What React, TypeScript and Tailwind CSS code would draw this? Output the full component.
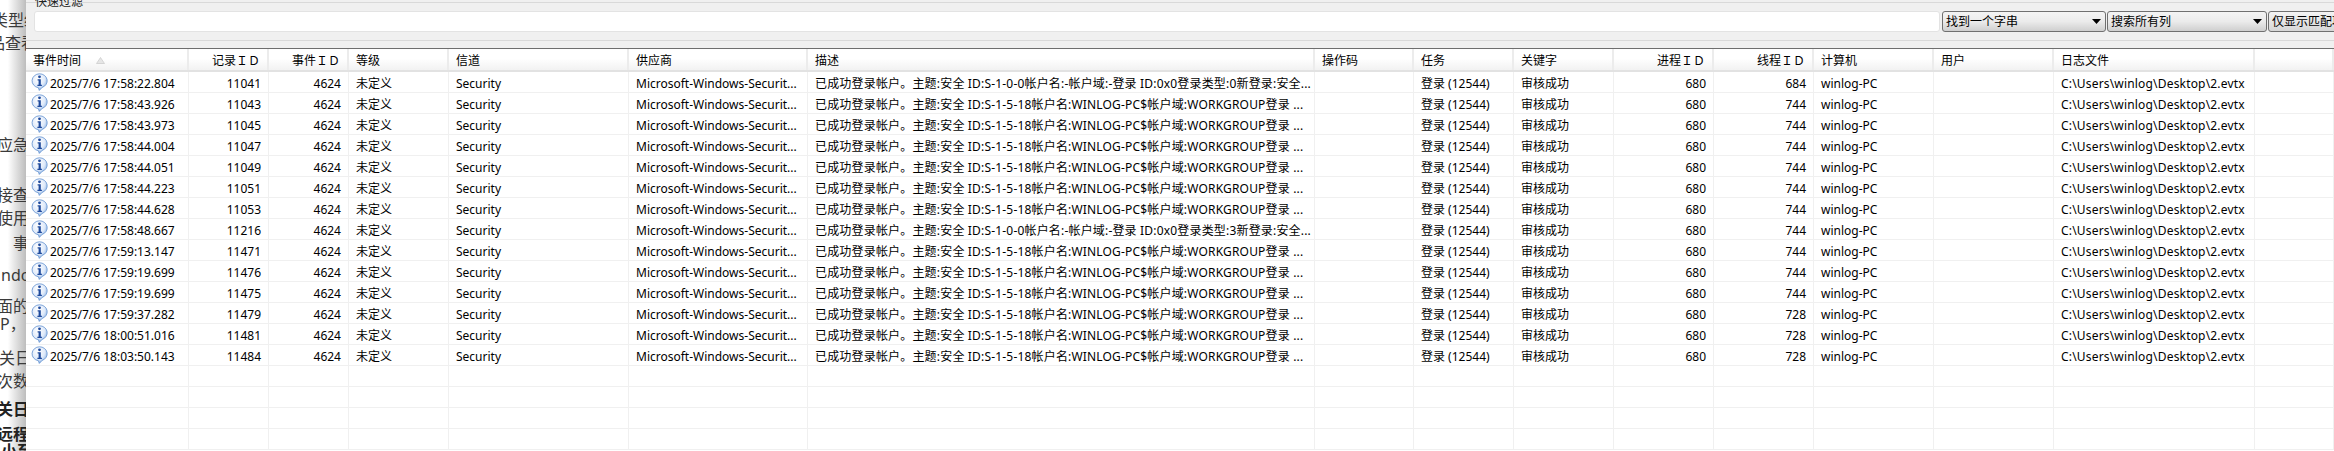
const columns = "grid grid-cols-[163px_80px_80px_100px_180px_179px_507px_99px_100px_100px_100px_100px_120px_120px_201px_1fr]";

const DESC_18 = "已成功登录帐户。主题:安全 ID:S-1-5-18帐户名:WINLOG-PC$帐户域:WORKGROUP登录 ...";

const rows = [
  { time: "2025/7/6 17:58:22.804", rec: "11041", thread: "684", desc: "已成功登录帐户。主题:安全 ID:S-1-0-0帐户名:-帐户域:-登录 ID:0x0登录类型:0新登录:安全..." },
  { time: "2025/7/6 17:58:43.926", rec: "11043", thread: "744", desc: DESC_18 },
  { time: "2025/7/6 17:58:43.973", rec: "11045", thread: "744", desc: DESC_18 },
  { time: "2025/7/6 17:58:44.004", rec: "11047", thread: "744", desc: DESC_18 },
  { time: "2025/7/6 17:58:44.051", rec: "11049", thread: "744", desc: DESC_18 },
  { time: "2025/7/6 17:58:44.223", rec: "11051", thread: "744", desc: DESC_18 },
  { time: "2025/7/6 17:58:44.628", rec: "11053", thread: "744", desc: DESC_18 },
  { time: "2025/7/6 17:58:48.667", rec: "11216", thread: "744", desc: "已成功登录帐户。主题:安全 ID:S-1-0-0帐户名:-帐户域:-登录 ID:0x0登录类型:3新登录:安全..." },
  { time: "2025/7/6 17:59:13.147", rec: "11471", thread: "744", desc: DESC_18 },
  { time: "2025/7/6 17:59:19.699", rec: "11476", thread: "744", desc: DESC_18 },
  { time: "2025/7/6 17:59:19.699", rec: "11475", thread: "744", desc: DESC_18 },
  { time: "2025/7/6 17:59:37.282", rec: "11479", thread: "728", desc: DESC_18 },
  { time: "2025/7/6 18:00:51.016", rec: "11481", thread: "728", desc: DESC_18 },
  { time: "2025/7/6 18:03:50.143", rec: "11484", thread: "728", desc: DESC_18 },
];

const headers = [
  { label: "事件时间" },
  { label: "记录ＩＤ", right: true },
  { label: "事件ＩＤ", right: true },
  { label: "等级" },
  { label: "信道" },
  { label: "供应商" },
  { label: "描述" },
  { label: "操作码" },
  { label: "任务" },
  { label: "关键字" },
  { label: "进程ＩＤ", right: true },
  { label: "线程ＩＤ", right: true },
  { label: "计算机" },
  { label: "用户" },
  { label: "日志文件" },
  { label: "" },
];

function InfoIcon() {
  return (
    <svg width="17" height="18" viewBox="0 0 17 18" className="shrink-0">
      <defs>
        <radialGradient id="bubble" cx="0.4" cy="0.3" r="0.8">
          <stop offset="0" stopColor="#ffffff" />
          <stop offset="0.55" stopColor="#dfeafa" />
          <stop offset="1" stopColor="#6f9fdc" />
        </radialGradient>
      </defs>
      <path
        d="M8.5 0.8a7.6 7 0 0 1 2.6 13.6L8.3 17.4 7.4 14.7A7.6 7 0 0 1 8.5 0.8z"
        fill="url(#bubble)"
        stroke="#5f8fcf"
        strokeWidth="0.8"
      />
      <circle cx="8.5" cy="3.8" r="1.4" fill="#1f4a9c" />
      <path d="M6.6 6.2h3.2v5.6h1.1v1.2H6.4v-1.2h1.2V7.4h-1z" fill="#1f4a9c" />
    </svg>
  );
}

function Caret() {
  return (
    <svg width="9" height="5" viewBox="0 0 9 5" className="shrink-0">
      <path d="M0 0h9L4.5 5z" fill="#000" />
    </svg>
  );
}

function Combo({ text, width }: { text: string; width: string }) {
  return (
    <div className={`${width} h-[21px] flex items-center justify-between pl-[3px] pr-[4px] border border-[#707070] rounded-[3px] bg-linear-to-b from-[#f4f4f4] via-[#ebebeb] to-[#cfcfcf] text-black`}>
      <span>{text}</span>
      <Caret />
    </div>
  );
}

function SideStrip() {
  return (
    <div className="w-[26px] h-full shrink-0 overflow-hidden bg-linear-to-r from-white from-[30%] to-[#bdbdbd] text-[16px] leading-[16px] text-[#3a3a3a] whitespace-nowrap">
      <div className="h-[16px] mt-[12px] -ml-[8px]">类型统</div>
      <div className="h-[16px] mt-[7px] -ml-[11px]">品查看</div>
      <div className="h-[16px] mt-[86px] -ml-[3px]">应急</div>
      <div className="h-[16px] mt-[34px] -ml-[3px]">接查</div>
      <div className="h-[16px] mt-[7px] -ml-[3px]">使用</div>
      <div className="h-[16px] mt-[9px] ml-[13px]">事</div>
      <div className="h-[16px] mt-[16px] ml-[1px]">ndows</div>
      <div className="h-[16px] mt-[15px] -ml-[3px]">面的</div>
      <div className="h-[16px] mt-[2px]">P，</div>
      <div className="h-[16px] mt-[18px] -ml-[1px]">关日</div>
      <div className="h-[16px] mt-[7px] -ml-[3px]">次数</div>
      <div className="h-[16px] mt-[12px] -ml-[3px] font-bold text-[#222]">关日</div>
      <div className="h-[16px] mt-[9px] -ml-[3px] font-bold text-[#222]">远程</div>
      <div className="h-[16px] mt-[1px] ml-[1px] font-bold text-[#222]">小至</div>
    </div>
  );
}

function FilterPanel() {
  return (
    <div className="h-[48px] shrink-0 overflow-hidden bg-[#f0f0f0] pt-[2px]">
      <div className="h-[39px] border-y border-[#d9d9d9] pl-[8px]">
        <div className="h-[14px] -mt-[8px] ml-[1px] leading-[14px] text-[#222]">快速过滤</div>
        <div className="flex gap-[1px] mt-[2px]">
          <div className="w-[1906px] h-[21px] mr-[1px] rounded-[3px] border border-[#e3e3e3] bg-white" />
          <Combo text="找到一个字串" width="w-[164px]" />
          <Combo text="搜索所有列" width="w-[160px]" />
          <div className="flex-1 h-[21px] -mr-[20px] pl-[3px] flex items-center whitespace-nowrap overflow-hidden border border-[#707070] rounded-[3px] bg-linear-to-b from-[#f4f4f4] to-[#d6d6d6] text-black">
            仅显示匹配项
          </div>
        </div>
      </div>
    </div>
  );
}

function HeaderRow() {
  return (
    <div className={`${columns} h-[24px] shrink-0 border-t border-[#6e6e6e] border-b-2 border-b-[#e2e2e2] bg-linear-to-b from-white from-[45%] to-[#f2f2f2]`}>
      {headers.map((h, i) => (
        <div
          key={i}
          className={`relative flex items-center px-[7px] pt-[2px] border-r-2 border-[#ececec] ${h.right ? "justify-end" : ""}`}
        >
          {h.label}
          {i === 0 && (
            <svg width="9" height="7" viewBox="0 0 9 7" className="absolute left-[70px] top-[8px]">
              <path d="M4.5 0.5L8.5 6.5H0.5z" fill="#e6e6e6" stroke="#c9c9c9" strokeWidth="0.7" />
            </svg>
          )}
        </div>
      ))}
    </div>
  );
}

function Cell({ children, right, wide }: { children?: React.ReactNode; right?: boolean; wide?: boolean }) {
  return (
    <div className={`flex items-center px-[7px] pt-[3px] border-r border-[#f0f0f0] whitespace-nowrap overflow-hidden ${right ? "justify-end" : ""} ${wide ? "tracking-[0.18px]" : ""}`}>
      {children}
    </div>
  );
}

function EventRow({ row }: { row: (typeof rows)[number] }) {
  return (
    <div className={`${columns} h-[21px] shrink-0 border-b border-[#f0f0f0]`}>
      <div className="flex items-center gap-[2px] pl-[5px] border-r border-[#f0f0f0] whitespace-nowrap overflow-hidden">
        <InfoIcon />
        <span className="pt-[3px]">{row.time}</span>
      </div>
      <Cell right>{row.rec}</Cell>
      <Cell right>4624</Cell>
      <Cell>未定义</Cell>
      <Cell>Security</Cell>
      <Cell>Microsoft-Windows-Securit...</Cell>
      <Cell wide>{row.desc}</Cell>
      <Cell />
      <Cell>登录 (12544)</Cell>
      <Cell>审核成功</Cell>
      <Cell right>680</Cell>
      <Cell right>{row.thread}</Cell>
      <Cell>winlog-PC</Cell>
      <Cell />
      <Cell wide>{"C:\\Users\\winlog\\Desktop\\2.evtx"}</Cell>
      <Cell />
    </div>
  );
}

function EmptyRow() {
  return (
    <div className={`${columns} h-[21px] shrink-0 border-b border-[#f0f0f0]`}>
      {headers.map((_, i) => (
        <Cell key={i} />
      ))}
    </div>
  );
}

export default function App() {
  return (
    <div className="flex w-[2334px] h-[451px] overflow-hidden bg-white text-[12px] text-black font-['Noto_Sans','Noto_Sans_CJK_SC',sans-serif]">
      <SideStrip />
      <div className="flex-1 min-w-0 flex flex-col">
        <FilterPanel />
        <HeaderRow />
        {rows.map((row) => (
          <EventRow key={row.rec} row={row} />
        ))}
        <EmptyRow />
        <EmptyRow />
        <EmptyRow />
        <EmptyRow />
      </div>
    </div>
  );
}
